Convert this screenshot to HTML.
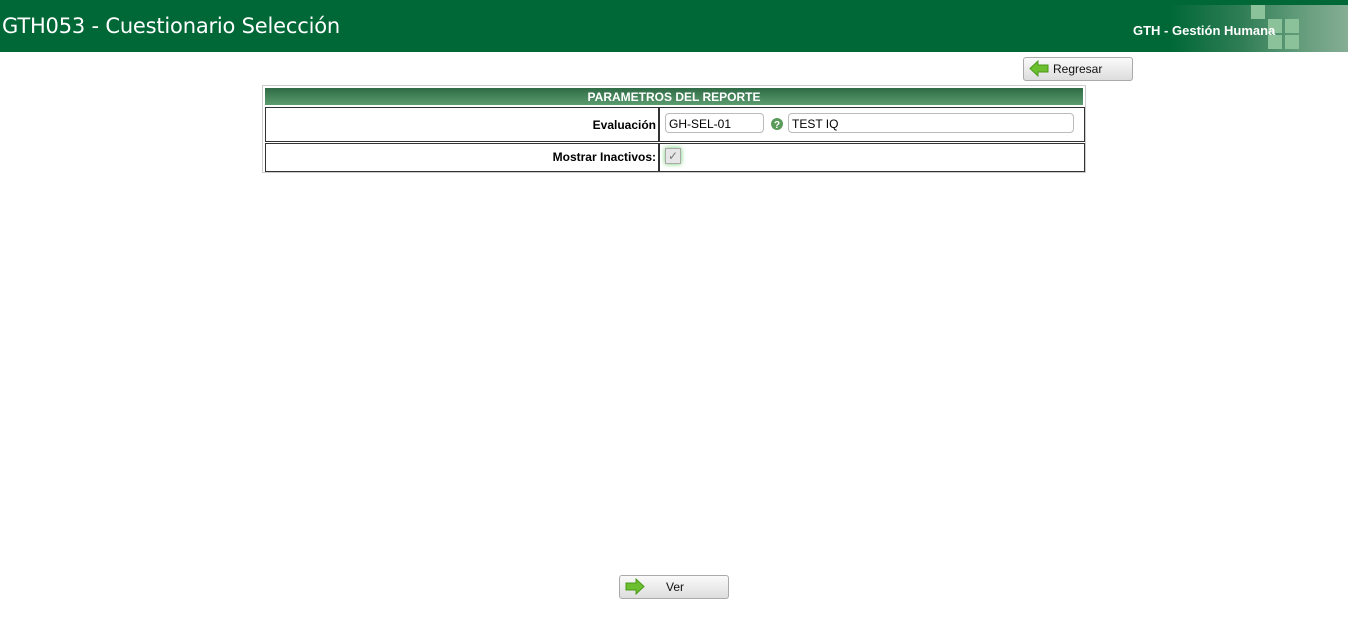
<!DOCTYPE html>
<html><head><meta charset="utf-8"><style>
body{margin:0;width:1348px;height:623px;background:#fff;font-family:"Liberation Sans",sans-serif;position:relative;overflow:hidden}
.hdr{position:absolute;left:0;top:0;width:1348px;height:52px;background:#006837}
.hdr h1{position:absolute;left:2px;top:14px;margin:0;font-size:21px;font-weight:normal;color:#fff;font-family:"DejaVu Sans",sans-serif;letter-spacing:-0.2px}
.banner{position:absolute;left:1170px;top:5px;width:178px;height:47px;background:linear-gradient(90deg,#006837 0%,#2f7d55 40%,#5f9a78 70%,#86ae95 100%)}
.tile{position:absolute;width:14px;height:14px;background:#8cc29a}
.gth{position:absolute;left:1133px;top:23px;color:#fff;font-weight:bold;font-size:13px;font-family:"Liberation Sans",sans-serif}
.btn{position:absolute;height:22px;border:1px solid #aaa;border-radius:3px;background:linear-gradient(#fafafa,#ddd);font-size:12px;color:#111}
.btn span{position:absolute;top:4px}
.tbl{position:absolute;left:262px;top:85px;width:822px;height:86px;border:1px solid #ccc}
.th{position:absolute;left:2px;top:2px;width:818px;height:17px;background:linear-gradient(#2f6b45,#5b9c6f);color:#fff;font-weight:bold;font-size:12px;text-align:center;line-height:19px}
.cell{position:absolute;border:1px solid #333;background:#fff}
.lbl{font-weight:bold;font-size:12px;position:absolute;right:2px}
.inp{position:absolute;height:20px;border:1px solid #bbb;border-radius:4px;font-size:12px;line-height:20px;padding-left:3px;box-sizing:border-box}
</style></head><body>
<div class="hdr"><h1>GTH053 - Cuestionario Selección</h1>
<div class="banner">
<div class="tile" style="left:81px;top:0px"></div>
<div class="tile" style="left:98px;top:14px"></div><div class="tile" style="left:115px;top:14px"></div>
<div class="tile" style="left:98px;top:30px"></div><div class="tile" style="left:115px;top:30px"></div>
</div>
<div class="gth">GTH - Gestión Humana</div></div>
<div class="btn" style="left:1023px;top:57px;width:108px"><svg style="position:absolute;left:5px;top:2px" width="20" height="17" viewBox="0 0 20 17"><path d="M1 8.5 L9 1 V5 H19 V12 H9 V16 Z" fill="#6cbf2e" stroke="#4a9a1a"/></svg><span style="left:29px">Regresar</span></div>
<div class="tbl">
<div class="th">PARAMETROS DEL REPORTE</div>
<div class="cell" style="left:2px;top:21px;width:392px;height:33px"><span class="lbl" style="top:10px">Evaluación</span></div>
<div class="cell" style="left:396px;top:21px;width:424px;height:33px">
<div class="inp" style="left:5px;top:5px;width:99px">GH-SEL-01</div>
<svg style="position:absolute;left:111px;top:10px" width="12" height="12"><circle cx="6" cy="6" r="6" fill="#5a9a5a"/><text x="6" y="10" font-size="10" font-weight="bold" fill="#fff" text-anchor="middle" font-family="Liberation Sans">?</text></svg>
<div class="inp" style="left:128px;top:5px;width:286px">TEST IQ</div></div>
<div class="cell" style="left:2px;top:57px;width:392px;height:27px"><span class="lbl" style="top:6px">Mostrar Inactivos:</span></div>
<div class="cell" style="left:396px;top:57px;width:424px;height:27px">
<div style="position:absolute;left:5px;top:4px;width:14px;height:14px;border:1px solid #aaa;background:#e6e6e6;box-shadow:0 0 5px #6c6;font-size:12px;color:#777;text-align:center;line-height:14px">✓</div></div>
</div>
<div class="btn" style="left:619px;top:575px;width:108px"><svg style="position:absolute;left:5px;top:2px" width="20" height="17" viewBox="0 0 20 17"><path d="M19 8.5 L11 1 V5 H1 V12 H11 V16 Z" fill="#6cbf2e" stroke="#4a9a1a"/></svg><span style="left:46px">Ver</span></div>
</body></html>
